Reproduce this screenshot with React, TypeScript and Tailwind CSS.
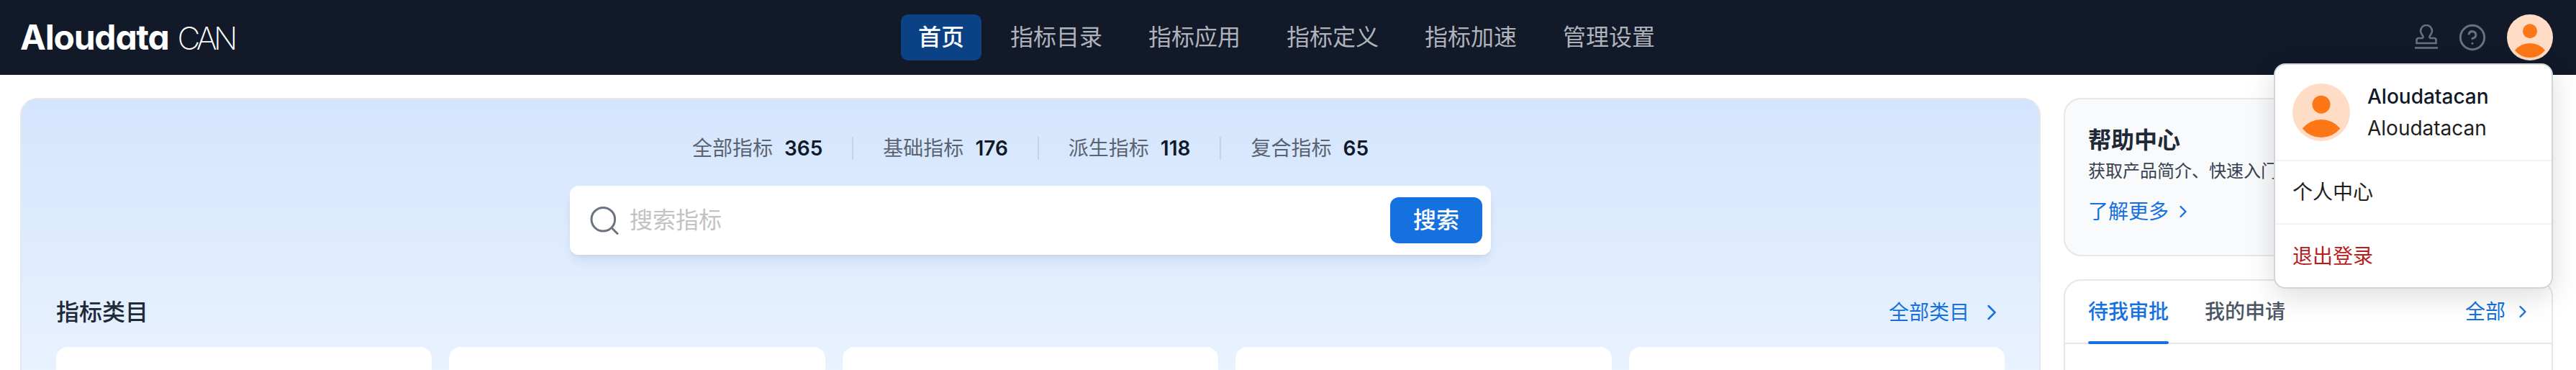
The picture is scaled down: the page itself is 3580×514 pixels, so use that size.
import { ChevronRight, CircleHelp } from "lucide-react";

const navItems = ["首页", "指标目录", "指标应用", "指标定义", "指标加速", "管理设置"];

const stats = [
  { label: "全部指标", value: 365 },
  { label: "基础指标", value: 176 },
  { label: "派生指标", value: 118 },
  { label: "复合指标", value: 65 },
];

const Avatar = ({ className }: { className: string }) => (
  <svg viewBox="0 0 64 64" className={className}>
    <circle cx="32" cy="32" r="32" fill="#fedcc5" />
    <circle cx="32" cy="23.3" r="10" fill="#fd7716" />
    <path d="M11 50A27 27 0 0 1 53 50A27 27 0 0 1 11 50Z" fill="#fd7716" />
  </svg>
);

const StampIcon = () => (
  <svg viewBox="0 0 32 36" fill="none" stroke="currentColor" strokeWidth="2.6" className="h-[36px] w-[32px]">
    <path d="M11.5 19V17C11.5 15 8 13.5 8 9A8 8 0 0 1 24 9C24 13.5 20.5 15 20.5 17V19" />
    <path d="M11.5 19H5A2.5 2.5 0 0 0 2.5 21.5V26H29.5V21.5A2.5 2.5 0 0 0 27 19H20.5" />
    <path d="M0 32.5H32" />
  </svg>
);

const SearchIcon = () => (
  <svg viewBox="0 0 40 40" fill="none" stroke="#6b7280" strokeWidth="3" strokeLinecap="round" className="h-[40px] w-[40px]">
    <circle cx="18.3" cy="18.7" r="16.3" />
    <path d="M30.5 31L38 38.5" />
  </svg>
);

const App = () => {
  return (
    <div className="relative h-[514px] overflow-hidden bg-white font-['Inter','Noto_Sans_CJK_SC',sans-serif]">
      <header className="flex h-[104px] items-center bg-[#121a2a] pl-[28px] pr-[32px]">
        <div className="flex flex-1 items-baseline text-white">
          <span className="text-[48px] font-bold leading-none tracking-[-1.2px] [font-feature-settings:'cv11']">Aloudata</span>
          <span className="ml-[12px] text-[44px] font-extralight leading-none tracking-[-5px]">CAN</span>
        </div>
        <nav className="flex gap-[16px]">
          {navItems.map((item, index) => (
            <div
              key={item}
              className={
                index === 0
                  ? "flex h-[64px] items-center rounded-[10px] bg-[#0a4285] px-[24px] text-[32px] font-medium text-white"
                  : "flex h-[64px] items-center px-[24px] text-[32px] text-[#b0b3b9]"
              }
            >
              {item}
            </div>
          ))}
        </nav>
        <div className="flex flex-1 items-center justify-end text-[#69707e]">
          <StampIcon />
          <CircleHelp className="ml-[28px] h-[40px] w-[40px]" strokeWidth={1.8} />
          <Avatar className="ml-[28px] h-[64px] w-[64px]" />
        </div>
      </header>

      <main className="flex gap-[32px] pl-[28px] pr-[32px] pt-[32px]">
        <section className="h-[500px] flex-1 rounded-[24px] border-2 border-[#e5e7eb] bg-gradient-to-b from-[#d3e5fd] to-[#f0f6ff] px-[48px] pt-[52px]">
          <div className="flex items-center justify-center">
            {stats.map((stat, index) => (
              <div key={stat.label} className="flex items-center">
                {index > 0 && <div className="mx-[41px] h-[32px] w-[2px] bg-[#c5d3e4]" />}
                <span className="text-[28px] leading-[32px] text-[#5c6370]">{stat.label}</span>
                <span className="ml-[16px] text-[28px] font-semibold leading-[32px] text-[#111827]">{stat.value}</span>
              </div>
            ))}
          </div>

          <div className="mx-auto mt-[36px] flex h-[96px] w-[1280px] items-center rounded-[12px] bg-white pl-[28px] pr-[12px] shadow-lg shadow-blue-900/10">
            <SearchIcon />
            <span className="ml-[15px] flex-1 text-[32px] text-[#c2c2c2]">搜索指标</span>
            <button className="h-[64px] w-[128px] rounded-[12px] bg-[#1570e0] text-[32px] font-medium text-white">搜索</button>
          </div>

          <div className="mt-[58px] flex items-center justify-between">
            <h2 className="text-[32px] font-medium leading-[44px] text-[#1f2937]">指标类目</h2>
            <div className="flex items-center text-[28px] text-[#1570e0]">
              全部类目
              <ChevronRight className="ml-[13px] h-[36px] w-[36px]" strokeWidth={1.7} />
            </div>
          </div>

          <div className="mt-[26px] grid grid-cols-5 gap-[24px]">
            {[1, 2, 3, 4, 5].map((card) => (
              <div key={card} className="h-[200px] rounded-[16px] bg-white" />
            ))}
          </div>
        </section>

        <aside className="flex w-[680px] flex-col gap-[32px]">
          <div className="h-[220px] rounded-[24px] border-2 border-[#e5e7eb] bg-[#f9fafb] px-[32px] pt-[35px]">
            <h3 className="text-[32px] font-semibold leading-[44px] text-[#1f2937]">帮助中心</h3>
            <p className="mt-[3px] text-[24px] leading-[36px] text-[#374151]">获取产品简介、快速入门、操作指南</p>
            <div className="mt-[18px] flex items-center text-[28px] leading-[40px] text-[#1570e0]">
              了解更多
              <ChevronRight className="ml-[6px] h-[28px] w-[28px]" strokeWidth={2} />
            </div>
          </div>

          <div className="h-[300px] rounded-[24px] border-2 border-[#e5e7eb] bg-white">
            <div className="flex h-[88px] items-center border-b-2 border-[#e5e7eb] pl-[32px] pr-[26px]">
              <div className="relative flex h-full items-center text-[28px] font-medium text-[#1570e0]">
                待我审批
                <div className="absolute bottom-[-2px] left-0 h-[4px] w-full rounded-full bg-[#1570e0]" />
              </div>
              <div className="ml-[50px] flex-1 text-[28px] font-medium text-[#4b5563]">我的申请</div>
              <div className="flex items-center text-[28px] text-[#1570e0]">
                全部
                <ChevronRight className="ml-[10px] h-[28px] w-[28px]" strokeWidth={2} />
              </div>
            </div>
          </div>
        </aside>
      </main>

      <div className="absolute right-[32px] top-[88px] w-[388px] rounded-[16px] border-2 border-[#d1d5db] bg-white shadow-[0_10px_40px_rgba(0,0,0,0.14)]">
        <div className="flex h-[134px] items-center border-b-2 border-[#f3f4f6] pl-[24px]">
          <Avatar className="h-[80px] w-[80px]" />
          <div className="ml-[24px]">
            <div className="text-[28px] font-medium leading-[44px] text-[#111827]">Aloudatacan</div>
            <div className="text-[28px] leading-[44px] text-[#1f1f1f]">Aloudatacan</div>
          </div>
        </div>
        <div className="flex h-[88px] items-center border-b-2 border-[#f3f4f6] pl-[24px] text-[28px] text-[#1f1f1f]">个人中心</div>
        <div className="flex h-[87px] items-center pl-[24px] text-[28px] text-[#b91c1c]">退出登录</div>
      </div>
    </div>
  );
};

export default App;
